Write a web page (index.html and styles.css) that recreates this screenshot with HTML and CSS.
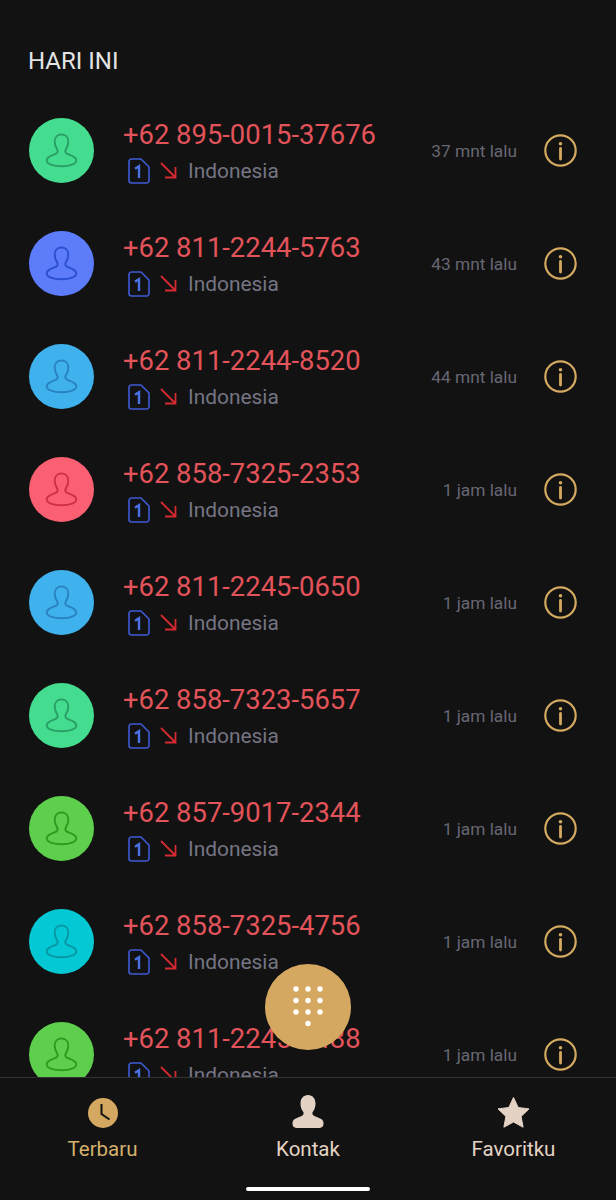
FILE: index.html
```html
<!DOCTYPE html>
<html lang="id">
<head>
  <meta charset="UTF-8">
  <meta name="viewport" content="width=device-width, initial-scale=1.0">
  <title>Terbaru</title>
  <link rel="stylesheet" href="styles.css">
</head>
<body>
  <svg class="defs" width="0" height="0">
    <symbol id="person" viewBox="0 0 65 65">
      <path d="M32.500 16.500c-4 0-6.800 2.600-6.800 6.800 0 3.200.8 5.500 2.200 7.600 1.200 1.800 1 3.400-.4 4.500-1.700 1.200-4.500 1.900-6.500 2.900-2.200 1.100-3.300 2.600-3.300 4.200 0 3.400 6.200 5.700 14.800 5.700s14.800-2.300 14.800-5.700c0-1.600-1.100-3.100-3.300-4.200-2-1-4.800-1.700-6.500-2.900-1.400-1.100-1.600-2.700-.4-4.500 1.400-2.100 2.200-4.400 2.200-7.600 0-4.200-2.800-6.800-6.800-6.800z" fill="none" stroke="currentColor" stroke-width="1.900" stroke-linejoin="round"/>
    </symbol>
    <symbol id="sim" viewBox="0 0 22 26">
      <path d="M3.500 1h9.500l8 8v13.500a2.500 2.500 0 0 1-2.500 2.500h-15a2.500 2.500 0 0 1-2.500-2.500v-19a2.500 2.500 0 0 1 2.500-2.500z" fill="none" stroke="#3f5bd6" stroke-width="1.600" stroke-linejoin="round"/>
      <path d="M7 10.800l4-2.600V20" fill="none" stroke="#4a72e6" stroke-width="2.400"/>
    </symbol>
    <symbol id="missed" viewBox="0 0 17 17">
      <path d="M1 1l14.500 14.500M15.500 5v10.500H5" fill="none" stroke="currentColor" stroke-width="1.800"/>
    </symbol>
    <symbol id="info" viewBox="0 0 33 33">
      <circle cx="16.500" cy="16.500" r="15.200" fill="none" stroke="currentColor" stroke-width="2.200"/>
      <circle cx="16.500" cy="9.800" r="1.800" fill="currentColor"/>
      <path d="M16.500 14.500v10.500" stroke="currentColor" stroke-width="2.800" stroke-linecap="round"/>
    </symbol>
  </svg>

  <div class="screen">
    <main class="recents">
      <h2 class="day">HARI INI</h2>

      <div class="call">
        <div class="avatar green"><svg><use href="#person"/></svg></div>
        <div class="call_text">
          <div class="number">+62 895-0015-37676</div>
          <div class="meta">
            <svg class="sim"><use href="#sim"/></svg>
            <svg class="missed"><use href="#missed"/></svg>
            <span class="country">Indonesia</span>
          </div>
        </div>
        <span class="time">37 mnt lalu</span>
        <svg class="info"><use href="#info"/></svg>
      </div>

      <div class="call">
        <div class="avatar blue"><svg><use href="#person"/></svg></div>
        <div class="call_text">
          <div class="number">+62 811-2244-5763</div>
          <div class="meta">
            <svg class="sim"><use href="#sim"/></svg>
            <svg class="missed"><use href="#missed"/></svg>
            <span class="country">Indonesia</span>
          </div>
        </div>
        <span class="time">43 mnt lalu</span>
        <svg class="info"><use href="#info"/></svg>
      </div>

      <div class="call">
        <div class="avatar sky"><svg><use href="#person"/></svg></div>
        <div class="call_text">
          <div class="number">+62 811-2244-8520</div>
          <div class="meta">
            <svg class="sim"><use href="#sim"/></svg>
            <svg class="missed"><use href="#missed"/></svg>
            <span class="country">Indonesia</span>
          </div>
        </div>
        <span class="time">44 mnt lalu</span>
        <svg class="info"><use href="#info"/></svg>
      </div>

      <div class="call">
        <div class="avatar pink"><svg><use href="#person"/></svg></div>
        <div class="call_text">
          <div class="number">+62 858-7325-2353</div>
          <div class="meta">
            <svg class="sim"><use href="#sim"/></svg>
            <svg class="missed"><use href="#missed"/></svg>
            <span class="country">Indonesia</span>
          </div>
        </div>
        <span class="time">1 jam lalu</span>
        <svg class="info"><use href="#info"/></svg>
      </div>

      <div class="call">
        <div class="avatar sky"><svg><use href="#person"/></svg></div>
        <div class="call_text">
          <div class="number">+62 811-2245-0650</div>
          <div class="meta">
            <svg class="sim"><use href="#sim"/></svg>
            <svg class="missed"><use href="#missed"/></svg>
            <span class="country">Indonesia</span>
          </div>
        </div>
        <span class="time">1 jam lalu</span>
        <svg class="info"><use href="#info"/></svg>
      </div>

      <div class="call">
        <div class="avatar green"><svg><use href="#person"/></svg></div>
        <div class="call_text">
          <div class="number">+62 858-7323-5657</div>
          <div class="meta">
            <svg class="sim"><use href="#sim"/></svg>
            <svg class="missed"><use href="#missed"/></svg>
            <span class="country">Indonesia</span>
          </div>
        </div>
        <span class="time">1 jam lalu</span>
        <svg class="info"><use href="#info"/></svg>
      </div>

      <div class="call">
        <div class="avatar lime"><svg><use href="#person"/></svg></div>
        <div class="call_text">
          <div class="number">+62 857-9017-2344</div>
          <div class="meta">
            <svg class="sim"><use href="#sim"/></svg>
            <svg class="missed"><use href="#missed"/></svg>
            <span class="country">Indonesia</span>
          </div>
        </div>
        <span class="time">1 jam lalu</span>
        <svg class="info"><use href="#info"/></svg>
      </div>

      <div class="call">
        <div class="avatar teal"><svg><use href="#person"/></svg></div>
        <div class="call_text">
          <div class="number">+62 858-7325-4756</div>
          <div class="meta">
            <svg class="sim"><use href="#sim"/></svg>
            <svg class="missed"><use href="#missed"/></svg>
            <span class="country">Indonesia</span>
          </div>
        </div>
        <span class="time">1 jam lalu</span>
        <svg class="info"><use href="#info"/></svg>
      </div>

      <div class="call">
        <div class="avatar lime"><svg><use href="#person"/></svg></div>
        <div class="call_text">
          <div class="number">+62 811-2245-3488</div>
          <div class="meta">
            <svg class="sim"><use href="#sim"/></svg>
            <svg class="missed"><use href="#missed"/></svg>
            <span class="country">Indonesia</span>
          </div>
        </div>
        <span class="time">1 jam lalu</span>
        <svg class="info"><use href="#info"/></svg>
      </div>
    </main>

    <button class="dialpad" aria-label="Papan tombol">
      <svg width="36" height="48" viewBox="0 0 36 48" fill="#fff">
        <circle cx="6" cy="6" r="2.700"/><circle cx="18" cy="6" r="2.700"/><circle cx="30" cy="6" r="2.700"/>
        <circle cx="6" cy="17.500" r="2.700"/><circle cx="18" cy="17.500" r="2.700"/><circle cx="30" cy="17.500" r="2.700"/>
        <circle cx="6" cy="29" r="2.700"/><circle cx="18" cy="29" r="2.700"/><circle cx="30" cy="29" r="2.700"/>
        <circle cx="18" cy="40.500" r="2.700"/>
      </svg>
    </button>

    <nav class="tabs">
      <div class="tab_row">
        <div class="tab active">
          <svg class="tab_icon" viewBox="0 0 36 36">
            <circle cx="18" cy="19" r="15" fill="currentColor"/>
            <path d="M16.500 10v10l8 5.500" fill="none" stroke="#121212" stroke-width="2"/>
          </svg>
          <span>Terbaru</span>
        </div>
        <div class="tab">
          <svg class="tab_icon" viewBox="0 0 36 36">
            <path d="M18 1c-4.500 0-7.500 3.500-7.500 8.500 0 3.500 1 6 2.500 8 1 1.500.8 3-.6 4-2 1.300-5.500 2.300-8 3.800C2.800 26.500 2.500 28 2.500 30c0 2.700 2 4 4.500 4h22c2.500 0 4.500-1.300 4.500-4 0-2-.3-3.500-1.900-4.700-2.500-1.500-6-2.500-8-3.800-1.400-1-1.600-2.500-.6-4 1.500-2 2.500-4.500 2.500-8 0-5-3-8.500-7.500-8.500z" fill="currentColor"/>
          </svg>
          <span>Kontak</span>
        </div>
        <div class="tab">
          <svg class="tab_icon" viewBox="0 0 36 36">
            <path d="M17.500 3.500l4.700 10 10.800 1.400-7.900 7.500 2 10.800-9.600-5.200-9.600 5.200 2-10.800L2 14.900l10.800-1.400z" fill="currentColor" stroke="currentColor" stroke-width="1" stroke-linejoin="round"/>
          </svg>
          <span>Favoritku</span>
        </div>
      </div>
      <div class="home_bar"></div>
    </nav>
  </div>
</body>
</html>
```

FILE: styles.css
```css
html, body {
  margin: 0;
  background: #121212;
}
body {
  font-family: Roboto, "Liberation Sans", sans-serif;
}
.defs {
  position: absolute;
}
.screen {
  position: relative;
  height: 1200px;
  display: flex;
  flex-direction: column;
  overflow: hidden;
}
.recents {
  flex: 1;
  min-height: 0;
  overflow: hidden;
}
.day {
  margin: 0;
  height: 94px;
  padding: 47px 0 0 28px;
  box-sizing: border-box;
  font-size: 24px;
  line-height: 28px;
  font-weight: 400;
  color: #e4e4e4;
}
.call {
  height: 113px;
  display: flex;
  align-items: center;
  padding: 0 39px 0 29px;
}
.avatar {
  width: 65px;
  height: 65px;
  border-radius: 50%;
  flex: none;
}
.avatar svg {
  display: block;
  width: 65px;
  height: 65px;
}
.green { background: #44dc8e; color: #2a9f67; }
.blue { background: #5c7cfa; color: #2a4fd0; }
.sky { background: #3fb2ee; color: #2a82c0; }
.pink { background: #fa6072; color: #d02f44; }
.lime { background: #5dcf4c; color: #2f9a20; }
.teal { background: #04c8d4; color: #0798a4; }
.call_text {
  flex: 1;
  margin-left: 29px;
}
.number {
  padding-top: 1px;
  font-size: 27.400px;
  line-height: 32px;
  color: #e2535a;
  white-space: nowrap;
}
.meta {
  display: flex;
  align-items: center;
  height: 26px;
  margin-top: 7px;
  margin-left: 5px;
}
.sim {
  width: 22px;
  height: 26px;
}
.missed {
  width: 17px;
  height: 17px;
  margin-left: 10px;
  color: #d42a30;
}
.country {
  margin-left: 11px;
  font-size: 20.900px;
  color: #757583;
}
.time {
  padding-top: 1px;
  font-size: 17.300px;
  color: #676773;
  white-space: nowrap;
}
.info {
  width: 33px;
  height: 33px;
  margin-left: 27px;
  flex: none;
  color: #d4a960;
}
.dialpad {
  position: absolute;
  left: 265px;
  top: 964px;
  width: 86px;
  height: 86px;
  padding: 0;
  border: 0;
  border-radius: 50%;
  background: #d4a860;
  display: flex;
  align-items: center;
  justify-content: center;
}
.tabs {
  flex: none;
  height: 123px;
  box-sizing: border-box;
  border-top: 1px solid #333;
  background: #121212;
}
.tab_row {
  display: grid;
  grid-template-columns: 205px 206px 205px;
  padding-top: 16px;
}
.tab {
  display: flex;
  flex-direction: column;
  align-items: center;
  color: #e4d3c4;
  font-size: 20.500px;
  line-height: 24px;
}
.tab.active {
  color: #d4b06c;
}
.tab_icon {
  width: 36px;
  height: 36px;
  margin-bottom: 7px;
}
.tab.active .tab_icon {
  color: #d4a860;
}
.home_bar {
  width: 124px;
  height: 4px;
  margin: 26px auto 0;
  border-radius: 2px;
  background: #fff;
}
```
